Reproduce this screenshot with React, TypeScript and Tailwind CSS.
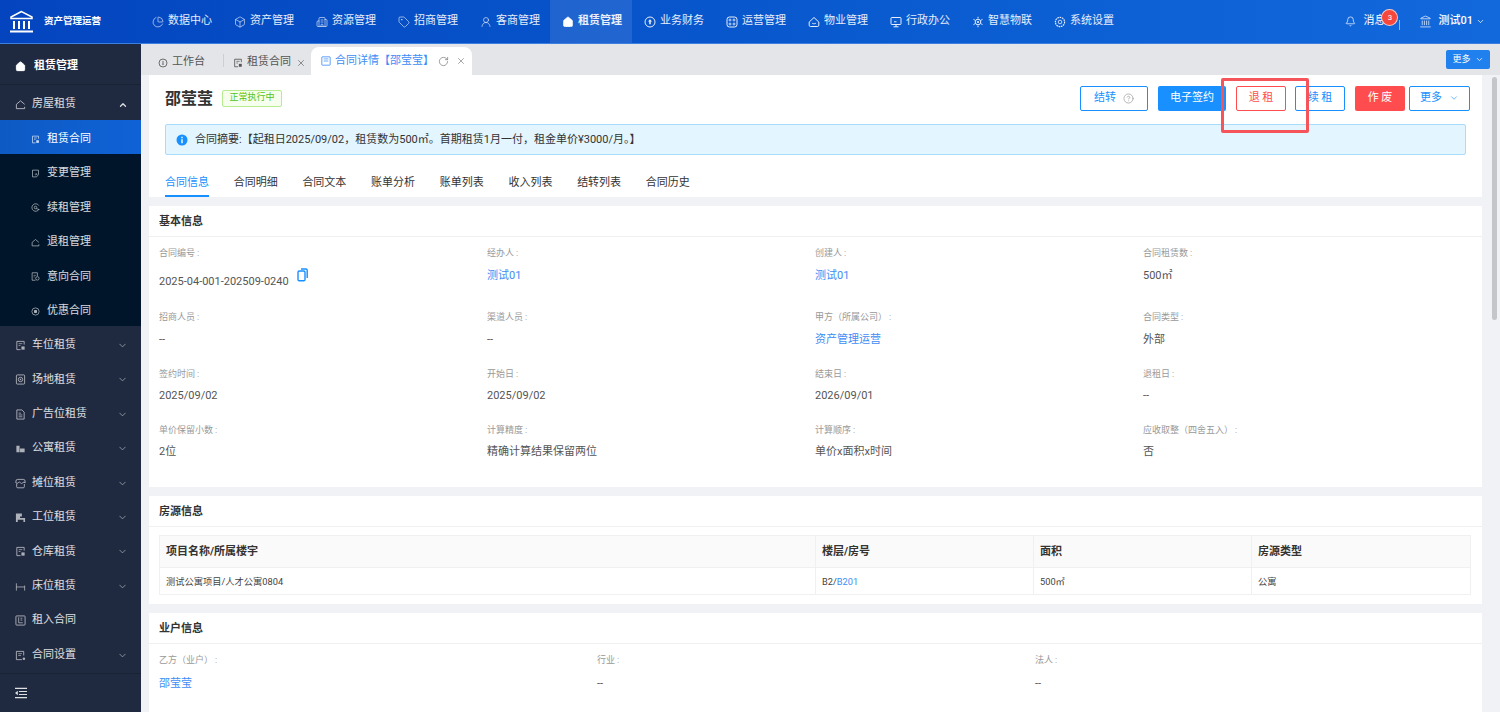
import type { ReactNode } from 'react';
import { Bell, Box, Building2, ChevronDown, ChevronUp, CircleHelp, Home, Landmark, PieChart, RotateCw, Tag, UserRound, X } from 'lucide-react';

const font = { fontFamily: 'Roboto, "Noto Sans CJK SC", sans-serif' };

type IconProps = { className?: string };

function Svg({ className, children }: IconProps & { children: ReactNode }) {
  return (
    <svg viewBox="0 0 12 12" fill="none" stroke="currentColor" strokeWidth="1" className={className}>
      {children}
    </svg>
  );
}

const DocMark = ({ className }: IconProps) => (
  <Svg className={className}>
    <path d="M10 5V1.5H2v9h4" />
    <path d="M4 4h4M4 6h2" strokeWidth=".8" />
    <rect x="7" y="7" width="3.5" height="3.5" fill="currentColor" stroke="none" />
  </Svg>
);
const DocArrow = ({ className }: IconProps) => (
  <Svg className={className}>
    <path d="M2 10.5v-9h8v6L7.5 10.5z" />
    <path d="M5 7h3M6.5 5.5 8 7 6.5 8.5" strokeWidth=".8" />
  </Svg>
);
const Renew = ({ className }: IconProps) => (
  <Svg className={className}>
    <path d="M10.8 8A5 5 0 1 1 10.5 3.5" />
    <circle cx="6" cy="6" r="1.7" />
    <path d="M7 7.5l4 1.2" />
  </Svg>
);
const HouseBase = ({ className }: IconProps) => (
  <Svg className={className}>
    <path d="M1.5 10.5V5.8L6 2l4.5 3.8" />
    <path d="M1.5 10.5h9v-2" />
  </Svg>
);
const DocCircle = ({ className }: IconProps) => (
  <Svg className={className}>
    <path d="M6 11H1.5V1h7v4.5" />
    <circle cx="8.5" cy="8.5" r="2.3" />
    <path d="M3.5 4.5h3M3.5 6.5h1.5" strokeWidth=".8" />
  </Svg>
);
const Target = ({ className }: IconProps) => (
  <Svg className={className}>
    <circle cx="6" cy="6" r="4.8" />
    <rect x="4" y="4" width="4" height="4" rx="1" fill="currentColor" stroke="none" />
  </Svg>
);
const Site = ({ className }: IconProps) => (
  <Svg className={className}>
    <rect x="1.5" y="1" width="9" height="10" rx="1" />
    <circle cx="6" cy="6" r="2.4" />
    <circle cx="6" cy="6" r=".8" fill="currentColor" stroke="none" />
  </Svg>
);
const AdDoc = ({ className }: IconProps) => (
  <Svg className={className}>
    <path d="M7.5 1H2v10h8V3.5z" />
    <path d="M4 4.5h2.5M4 6.5h4M4 8.5h4" strokeWidth=".9" />
  </Svg>
);
const Apartment = ({ className }: IconProps) => (
  <Svg className={className}>
    <path d="M1.5 3h3.5v7H1.5zM5.5 6h5v4h-5z" fill="currentColor" stroke="none" />
  </Svg>
);
const Stall = ({ className }: IconProps) => (
  <Svg className={className}>
    <path d="M1 5.5V3.5Q1 1.5 3 1.5h6q2 0 2 2v2" />
    <path d="M1 5.2q1.2 1.6 2.5 0t2.5 0 2.5 0T11 5.2" />
    <path d="M1.8 6.5v3q0 1.2 1.2 1.2h6q1.2 0 1.2-1.2v-3" />
  </Svg>
);
const Workstation = ({ className }: IconProps) => (
  <Svg className={className}>
    <path d="M1 1.5h6.5v3.5H5.5v1.5H11V11H9.2V8.5H3V11H1z" fill="currentColor" stroke="none" />
  </Svg>
);
const Bed = ({ className }: IconProps) => (
  <Svg className={className}>
    <path d="M1.5 2.5v8M1.5 6.5h9M10.5 5v5.5" strokeWidth=".9" />
  </Svg>
);
const RentIn = ({ className }: IconProps) => (
  <Svg className={className}>
    <rect x="1" y="1" width="10" height="10" rx=".8" />
    <path d="M4 2.5V8.5H8.5M6 3.5h2M6 5.5h2" strokeWidth=".9" />
  </Svg>
);
const DocDot = ({ className }: IconProps) => (
  <Svg className={className}>
    <path d="M9.5 6V1.5h-8v9h6" />
    <path d="M3.5 4h4M3.5 6h3" strokeWidth=".8" />
    <circle cx="9.7" cy="9.5" r="1.4" fill="currentColor" stroke="none" />
  </Svg>
);
const Finance = ({ className }: IconProps) => (
  <Svg className={className}>
    <circle cx="6" cy="6" r="5" />
    <path d="M6 3.2 8 5.5H6.8v2.8H5.2V5.5H4z" fill="currentColor" stroke="none" />
  </Svg>
);
const Ops = ({ className }: IconProps) => (
  <Svg className={className}>
    <rect x="1" y="1" width="10" height="10" rx="2.5" />
    <circle cx="4" cy="4" r="1" strokeWidth=".8" />
    <circle cx="8" cy="4" r="1" strokeWidth=".8" />
    <circle cx="4" cy="8" r="1" strokeWidth=".8" />
    <circle cx="8" cy="8" r="1" strokeWidth=".8" />
  </Svg>
);
const HouseSmile = ({ className }: IconProps) => (
  <Svg className={className}>
    <path d="M1.2 6 6 1.5 10.8 6v3.2q0 1.3-1.3 1.3h-7Q1.2 10.5 1.2 9.2z" />
    <path d="M4 7.2q2 1.4 4 0" strokeWidth=".8" />
  </Svg>
);
const Screen = ({ className }: IconProps) => (
  <Svg className={className}>
    <rect x="1" y="1.5" width="10" height="7" rx=".8" />
    <path d="M6 8.5v2.2M3.5 10.8h5M4 5.8h2.5" />
  </Svg>
);
const IotGear = ({ className }: IconProps) => (
  <Svg className={className}>
    <circle cx="6" cy="6" r="2.8" />
    <circle cx="6" cy="6" r="1.1" fill="currentColor" stroke="none" />
    <path d="M6 .8v1.6M6 9.6v1.6M1.5 3.4l1.4.8M9.1 7.8l1.4.8M1.5 8.6l1.4-.8M9.1 4.2l1.4-.8" />
  </Svg>
);
const Gear = ({ className }: IconProps) => (
  <Svg className={className}>
    <circle cx="6" cy="6" r="4.6" strokeDasharray="1.6 .7" strokeWidth="1.2" />
    <circle cx="6" cy="6" r="1.8" strokeWidth=".8" />
  </Svg>
);
const Dial = ({ className }: IconProps) => (
  <Svg className={className}>
    <circle cx="6" cy="6" r="4.8" />
    <path d="M6 3.5v3.5" />
    <circle cx="6" cy="7.5" r=".8" fill="currentColor" stroke="none" />
  </Svg>
);
const DetailDoc = ({ className }: IconProps) => (
  <Svg className={className}>
    <rect x="1" y="1" width="10" height="10" rx=".5" />
    <path d="M3.2 3.5h5.6M3.2 6h5.6" strokeWidth=".9" />
  </Svg>
);
const Collapse = ({ className }: IconProps) => (
  <svg viewBox="0 0 12 12" fill="currentColor" className={className}>
    <path d="M0 .8h12V2H0zM0 10h12v1.2H0zM4 4h8v1H4zM4 7h8v1H4zM0 6l2.8-2.2v4.4z" />
  </svg>
);
const CopyDoc = ({ className }: IconProps) => (
  <svg viewBox="0 0 11 14" fill="none" stroke="currentColor" strokeWidth="1.4" className={className}>
    <rect x="1" y="3" width="7" height="9.8" rx="1.2" />
    <path d="M4 1h5q1.2 0 1.2 1.2V10" />
  </svg>
);

const navItems = [
  { label: '数据中心', icon: PieChart },
  { label: '资产管理', icon: Box },
  { label: '资源管理', icon: Building2 },
  { label: '招商管理', icon: Tag },
  { label: '客商管理', icon: UserRound },
  { label: '租赁管理', icon: Home, active: true },
  { label: '业务财务', icon: Finance },
  { label: '运营管理', icon: Ops },
  { label: '物业管理', icon: HouseSmile },
  { label: '行政办公', icon: Screen },
  { label: '智慧物联', icon: IotGear },
  { label: '系统设置', icon: Gear },
];

const subItems = [
  { label: '租赁合同', icon: DocMark, active: true },
  { label: '变更管理', icon: DocArrow },
  { label: '续租管理', icon: Renew },
  { label: '退租管理', icon: HouseBase },
  { label: '意向合同', icon: DocCircle },
  { label: '优惠合同', icon: Target },
];

const groupItems = [
  { label: '车位租赁', icon: DocMark, arrow: true },
  { label: '场地租赁', icon: Site, arrow: true },
  { label: '广告位租赁', icon: AdDoc, arrow: true },
  { label: '公寓租赁', icon: Apartment, arrow: true },
  { label: '摊位租赁', icon: Stall, arrow: true },
  { label: '工位租赁', icon: Workstation, arrow: true },
  { label: '仓库租赁', icon: DocMark, arrow: true },
  { label: '床位租赁', icon: Bed, arrow: true },
  { label: '租入合同', icon: RentIn },
  { label: '合同设置', icon: DocDot, arrow: true },
];

const pageTabs = ['合同信息', '合同明细', '合同文本', '账单分析', '账单列表', '收入列表', '结转列表', '合同历史'];

const basicRows: { label: string; value: string; link?: boolean; copy?: boolean }[][] = [
  [
    { label: '合同编号', value: '2025-04-001-202509-0240', copy: true },
    { label: '经办人', value: '测试01', link: true },
    { label: '创建人', value: '测试01', link: true },
    { label: '合同租赁数', value: '500㎡' },
  ],
  [
    { label: '招商人员', value: '--' },
    { label: '渠道人员', value: '--' },
    { label: '甲方（所属公司）', value: '资产管理运营', link: true },
    { label: '合同类型', value: '外部' },
  ],
  [
    { label: '签约时间', value: '2025/09/02' },
    { label: '开始日', value: '2025/09/02' },
    { label: '结束日', value: '2026/09/01' },
    { label: '退租日', value: '--' },
  ],
  [
    { label: '单价保留小数', value: '2位' },
    { label: '计算精度', value: '精确计算结果保留两位' },
    { label: '计算顺序', value: '单价x面积x时间' },
    { label: '应收取整（四舍五入）', value: '否' },
  ],
];

function Logo() {
  return (
    <svg width="25" height="23" viewBox="0 0 25 23" fill="none" stroke="white" strokeWidth="1.5">
      <path d="M12.5 1.5 2 7v1.5h21V7z" />
      <path d="M5 11v8M10 11v8M15 11v8M20 11v8" strokeWidth="2" />
      <path d="M1 21.5h23" strokeWidth="2" />
    </svg>
  );
}

function TopBar() {
  return (
    <header className="flex h-11 shrink-0 border-b border-[#3d7fe0] bg-linear-to-r from-[#0445bf] to-[#1269dc] text-white">
      <div className="flex w-[140px] shrink-0 items-center pl-[9px]">
        <Logo />
        <span className="ml-[10px] text-[9.5px] font-bold">资产管理运营</span>
      </div>
      <nav className="flex">
        {navItems.map((item) => (
          <div
            key={item.label}
            className={`flex w-[82px] items-center gap-[4px] pl-3 text-[11px] text-white/90 ${item.active ? 'bg-white/10 font-bold' : ''}`}
          >
            <item.icon className="size-[12px] shrink-0" strokeWidth={1.25} fill={item.active ? 'white' : 'none'} />
            {item.label}
          </div>
        ))}
      </nav>
      <div className="ml-auto flex items-center pr-[15px] text-[11px]">
        <Bell className="size-[11px]" strokeWidth={1.5} />
        <span className="relative ml-[7px] mr-[14px]">
          消息
          <span className="absolute -top-[4px] left-[18px] flex size-[17px] items-center justify-center rounded-full border border-white/70 bg-[#f5473b] text-[8px]">
            3
          </span>
        </span>
        <span className="mr-[19px] mt-[6px] h-[10px] w-px bg-white/50" />
        <Landmark className="size-[13px]" strokeWidth={1.25} />
        <span className="ml-[6px] font-medium">测试01</span>
        <ChevronDown className="ml-[3px] size-[9px]" />
      </div>
    </header>
  );
}

function Sidebar() {
  return (
    <aside className="flex w-[141px] shrink-0 flex-col bg-[#1f2940] text-[11px] text-white/85">
      <div className="flex h-[41px] shrink-0 items-center gap-[8px] border-b border-[#1a2336] pl-[15px] pt-[4px] font-bold text-white">
        <Home className="size-[11px]" fill="white" />
        租赁管理
      </div>
      <div className="flex h-[35px] shrink-0 items-center gap-[6px] pl-[15px] pt-[4px]">
        <HouseBase className="size-[11px] opacity-80" />
        房屋租赁
        <ChevronUp className="ml-auto mr-[13px] size-[10px]" strokeWidth={3} />
      </div>
      <div className="bg-[#001529]">
        {subItems.map((item) => (
          <div
            key={item.label}
            className={`flex h-[34.4px] items-center gap-[7px] pl-[31px] pt-[4px] ${item.active ? 'bg-linear-to-r from-[#0e5ac4] to-[#0f62d6] text-white' : ''}`}
          >
            <item.icon className="size-[9px] opacity-80" />
            {item.label}
          </div>
        ))}
      </div>
      {groupItems.map((item) => (
        <div key={item.label} className="flex h-[34.4px] shrink-0 items-center gap-[6px] pl-[15px] pt-[4px]">
          <item.icon className="size-[11px] opacity-75" />
          {item.label}
          {item.arrow && <ChevronDown className="ml-auto mr-[13px] size-[11px] opacity-60" strokeWidth={2} />}
        </div>
      ))}
      <div className="mt-[3px] flex flex-1 items-center border-t border-[#1a2336] pl-[15px]">
        <Collapse className="size-[12px]" />
      </div>
    </aside>
  );
}

function TabBar() {
  return (
    <div className="flex h-[31px] shrink-0 items-end bg-[#e3e5e8] pl-[17px] pr-[10px] text-[11px] text-[#555]">
      <div className="flex h-full items-center gap-[4px] pt-[6px]">
        <Dial className="size-[10px]" />
        工作台
      </div>
      <span className="mb-[8px] ml-[18px] mr-[9px] h-[13px] w-px bg-[#b8d4f5]" />
      <div className="flex h-full items-center gap-[4px] pt-[6px]">
        <DocMark className="size-[10px]" />
        租赁合同
        <X className="ml-[1px] size-[10px]" strokeWidth={1.5} />
      </div>
      <div className="ml-[5px] flex h-[28px] w-[161px] items-center gap-[4px] rounded-t-[8px] bg-white pl-[10px] text-[#3f8df5]">
        <DetailDoc className="size-[10px] shrink-0" />
        合同详情【邵莹莹】
        <RotateCw className="size-[11px] text-[#777]" strokeWidth={1.5} />
        <X className="ml-[3px] size-[10px] text-[#777]" strokeWidth={1.5} />
      </div>
      <button className="mb-[6px] ml-auto flex h-[19px] w-[44px] items-center justify-center gap-[4px] rounded-[2px] bg-[#1f80ee] text-[9px] text-white">
        更多
        <ChevronDown className="size-[9px]" />
      </button>
    </div>
  );
}

function ActionButtons() {
  const base = 'flex h-[25px] items-center justify-center rounded-[2px] text-[11px]';
  const outlined = `${base} border border-[#1890ff] text-[#1890ff]`;
  return (
    <div className="flex items-center">
      <button className={`${outlined} w-[68px] gap-[7px]`}>
        结转
        <CircleHelp className="size-[11px] text-[#999]" strokeWidth={1.5} />
      </button>
      <button className={`${base} ml-[10px] w-[68px] bg-[#1890ff] text-white`}>电子签约</button>
      <button className={`${base} ml-[10px] w-[50px] border border-[#ff4d4f] text-[#ff4d4f]`}>退 租</button>
      <button className={`${outlined} ml-[9px] w-[50px]`}>续 租</button>
      <button className={`${base} ml-[10px] w-[50px] bg-[#ff4d4f] text-white`}>作 废</button>
      <button className={`${outlined} ml-[4px] w-[61px] gap-[7px]`}>
        更多
        <ChevronDown className="size-[10px]" strokeWidth={1.5} />
      </button>
    </div>
  );
}

function SummaryPanel() {
  return (
    <section className="h-[122px] shrink-0 bg-white px-4">
      <div className="flex h-[49px] items-center pb-[3px]">
        <h1 className="mt-[1px] text-[16px] font-bold text-[#333]">邵莹莹</h1>
        <span className="ml-[9px] flex h-[17px] w-[60px] items-center justify-center rounded-[2px] border border-[#b7eb8f] bg-[#f6ffed] text-[9px] text-[#52c41a]">
          正常执行中
        </span>
        <div className="ml-auto mr-[-4px]">
          <ActionButtons />
        </div>
      </div>
      <div className="flex h-[31px] items-center gap-[7px] rounded-[2px] border border-[#a8dcfb] bg-[#e3f5fe] pl-[10px] text-[11px] text-[#333]">
        <svg viewBox="0 0 12 12" className="size-[12px]">
          <circle cx="6" cy="6" r="5.5" fill="#1890ff" />
          <path d="M5.3 2.8h1.4v1.4H5.3zM5.3 5.2h1.4v4H5.3z" fill="white" />
        </svg>
        <span className="pt-[1px]">合同摘要:【起租日2025/09/02，租赁数为500㎡。首期租赁1月一付，租金单价¥3000/月。】</span>
      </div>
      <div className="mt-[17px] flex gap-[24.7px] text-[11px] text-[#333]">
        {pageTabs.map((tab, i) => (
          <div key={tab} className={`h-[25px] pt-[3px] ${i === 0 ? 'border-b-2 border-[#1890ff] text-[#1890ff]' : ''}`}>
            {tab}
          </div>
        ))}
      </div>
    </section>
  );
}

function CardHeader({ title }: { title: string }) {
  return (
    <div className="flex h-[31px] items-center border-b border-[#eef0f2] px-[10px] pt-[3px] text-[11px] font-bold text-[#333]">
      {title}
    </div>
  );
}

function FieldLabel({ text }: { text: string }) {
  return (
    <div className="text-[9px] leading-[16px] text-[#999]">
      {text}
      <span className="ml-[2px]">:</span>
    </div>
  );
}

function BasicInfo() {
  const rowHeights = ['h-[64px]', 'h-[57px]', 'h-[56px]', 'h-[56px]'];
  return (
    <section className="mt-[9px] h-[281px] shrink-0 bg-white">
      <CardHeader title="基本信息" />
      <div className="px-[10px] pt-[8px]">
        {basicRows.map((row, i) => (
          <div key={i} className={`grid grid-cols-[328px_328px_328px_1fr] ${rowHeights[i]}`}>
            {row.map((cell) => (
              <div key={cell.label}>
                <FieldLabel text={cell.label} />
                {cell.copy ? (
                  <div className="mt-[7px] flex items-start gap-[8px] text-[11px] leading-[16px] text-[#555]">
                    <span className="mt-[6px]">{cell.value}</span>
                    <CopyDoc className="h-[14px] w-[11px] text-[#1890ff]" />
                  </div>
                ) : (
                  <div className={`${i < 2 ? 'mt-[7px]' : 'mt-[6px]'} text-[11px] leading-[16px] ${cell.link ? 'text-[#3f8df5]' : 'text-[#555]'}`}>
                    {cell.value}
                  </div>
                )}
              </div>
            ))}
          </div>
        ))}
      </div>
    </section>
  );
}

function HouseInfo() {
  return (
    <section className="mt-[9px] h-[108px] shrink-0 bg-white">
      <CardHeader title="房源信息" />
      <div className="pl-[10px] pr-[11px] pt-[8px]">
        <div className="border border-[#f0f0f0]">
          <div className="grid h-[31px] grid-cols-[655px_218px_218px_1fr] bg-[#fafafa] text-[11px] font-bold text-[#333]">
            <div className="flex items-center pl-[6px] pt-[2px]">项目名称/所属楼宇</div>
            <div className="flex items-center border-l border-[#f0f0f0] pl-[6px] pt-[2px]">楼层/房号</div>
            <div className="flex items-center border-l border-[#f0f0f0] pl-[6px] pt-[2px]">面积</div>
            <div className="flex items-center border-l border-[#f0f0f0] pl-[6px] pt-[2px]">房源类型</div>
          </div>
          <div className="grid h-[27px] grid-cols-[655px_218px_218px_1fr] border-t border-[#f0f0f0] text-[9.25px] text-[#444]">
            <div className="flex items-center pl-[6px] pt-[2px]">测试公寓项目/人才公寓0804</div>
            <div className="flex items-center border-l border-[#f0f0f0] pl-[6px] pt-[2px]">
              B2/<span className="text-[#3f8df5]">B201</span>
            </div>
            <div className="flex items-center border-l border-[#f0f0f0] pl-[6px] pt-[2px]">500㎡</div>
            <div className="flex items-center border-l border-[#f0f0f0] pl-[6px] pt-[2px]">公寓</div>
          </div>
        </div>
      </div>
    </section>
  );
}

function TenantInfo() {
  const cells = [
    { label: '乙方（业户）', value: '邵莹莹', link: true },
    { label: '行业', value: '--' },
    { label: '法人', value: '--' },
  ];
  return (
    <section className="mt-[9px] flex-1 bg-white">
      <CardHeader title="业户信息" />
      <div className="grid grid-cols-[438px_438px_1fr] px-[10px] pt-[8px]">
        {cells.map((cell) => (
          <div key={cell.label}>
            <FieldLabel text={cell.label} />
            <div className={`mt-[8px] text-[11px] leading-[16px] ${cell.link ? 'text-[#3f8df5]' : 'text-[#555]'}`}>
              {cell.value}
            </div>
          </div>
        ))}
      </div>
    </section>
  );
}

export default function App() {
  return (
    <div className="relative flex h-[712px] w-[1500px] flex-col overflow-hidden bg-[#f0f2f5]" style={font}>
      <TopBar />
      <div className="flex min-h-0 flex-1">
        <Sidebar />
        <main className="flex min-w-0 flex-1 flex-col">
          <TabBar />
          <div className="flex min-h-0 flex-1">
            <div className="flex min-w-0 flex-1 flex-col pl-2">
              <SummaryPanel />
              <BasicInfo />
              <HouseInfo />
              <TenantInfo />
            </div>
            <div className="w-[18px] shrink-0 pl-[10px] pt-[2px]">
              <div className="h-[243px] w-[5px] rounded-full bg-[#c4c6c9]" />
            </div>
          </div>
        </main>
      </div>
      <div className="absolute left-[1221px] top-[78px] h-[55px] w-[88px] rounded-[2px] border-[3px] border-[#f4545a]" />
    </div>
  );
}
